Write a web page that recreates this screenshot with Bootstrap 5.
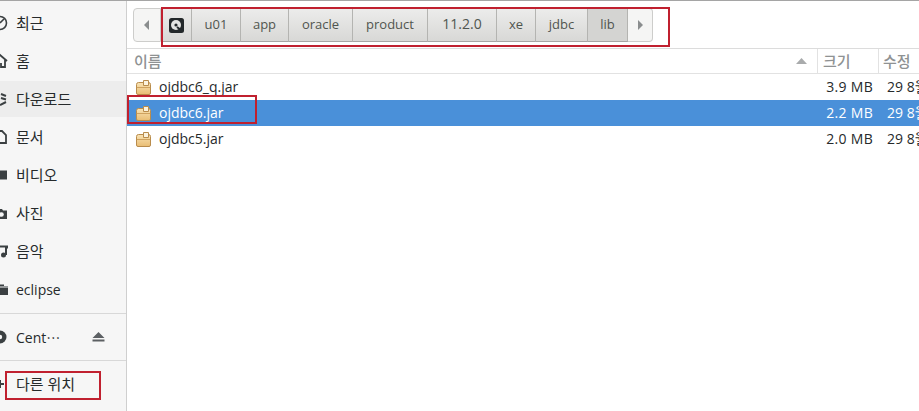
<!DOCTYPE html>
<html lang="ko">
<head>
<meta charset="UTF-8">
<title>ojdbc</title>
<link href="https://cdn.jsdelivr.net/npm/bootstrap@5.3.2/dist/css/bootstrap.min.css" rel="stylesheet">
<style>
body { width: 919px; height: 411px; overflow: hidden; background: #fff; color: #262a2b; font-family: "Open Sans", "Noto Sans CJK KR", sans-serif; font-size: 14px; }
.frame { height: 411px; border-top: 1px solid #a5a5a5; position: relative; overflow: hidden; }
.side { width: 127px; background: #f6f6f6; border-right: 1px solid #cfcfcf; padding-top: 3px; }
.side-item { height: 36px; margin: 1px 0; flex: none; }
.side-item.hov { background: #ededed; }
.side-item svg { flex: none; margin-right: 8px; }
.ko { font-size: 15px; }
.eject { margin-left: 32px; }
.side-sep { border-top: 1px solid #d8d8d8; margin: 5px 0 4px; }
.side-sep.next { margin: 4px 0; }
.pathbar { height: 48px; padding: 7px 6px 0; border-bottom: 1px solid #dcdcdc; }
.seg { height: 34px; border: 1px solid #b4b4b1; border-left: 0; border-bottom-color: #a6a6a4; background: linear-gradient(#ececeb, #d8d8d6); color: #50554f; font-size: 13px; }
.seg.cur { background: #d4d4d2; }
.seg.arrow { background: #f5f5f4; border-color: #cdcdcb; }
.s-back { width: 28px; border-left: 1px solid #cdcdcb; border-radius: 4px 0 0 4px; }
.s-disk { width: 31px; }
.s-u01 { width: 49px; }
.s-app { width: 48px; }
.s-oracle { width: 64px; }
.s-product { width: 75px; }
.s-ver { width: 69px; font-size: 14px; padding-bottom: 3px; }
.s-xe { width: 39px; }
.s-jdbc { width: 52px; }
.s-lib { width: 40px; }
.s-fwd { width: 25px; border-radius: 0 4px 4px 0; }
.cols { height: 25px; border-bottom: 1px solid #e2e2e2; color: #8f9293; font-weight: 500; font-size: 15px; }
.c-name { width: 690px; padding-left: 7px; padding-right: 10px; }
.c-size { width: 61px; padding-left: 5px; border-left: 1px solid #e2e2e2; }
.c-date { padding-left: 4px; border-left: 1px solid #e2e2e2; white-space: nowrap; }
.file { height: 26px; }
.file.sel { background: #4a90d9; color: #fff; }
.f-name { width: 690px; padding-left: 9px; gap: 8px; }
.f-label { padding-bottom: 2px; }
.f-size { width: 61px; text-align: right; padding-right: 5px; padding-bottom: 2px; letter-spacing: .3px; }
.f-date { padding-left: 9px; padding-bottom: 2px; white-space: nowrap; }
.redbox { position: absolute; border: 2px solid #c0202f; }
.rb-path { left: 161px; top: 6px; width: 509px; height: 40px; }
.rb-file { left: 127px; top: 94px; width: 130px; height: 29px; }
.rb-other { left: 5px; top: 370px; width: 96px; height: 29px; }
</style>
</head>
<body>
<svg width="0" height="0" class="position-absolute">
  <defs>
    <linearGradient id="pkg" x1="0" y1="0" x2="0" y2="1"><stop offset="0" stop-color="#f9e3b4"/><stop offset="1" stop-color="#e9bd74"/></linearGradient>
    <symbol id="jar" viewBox="0 0 15 15">
      <path d="M.5 4.5 Q.5 2.5 2.5 2.5 H12.5 Q14.5 2.5 14.5 4.5 V13 Q14.5 14.5 13 14.5 H2 Q.5 14.5 .5 13Z" fill="url(#pkg)" stroke="#b98c4c"/>
      <path d="M.8 7.5 H14.2" stroke="#cfa25f"/>
      <path d="M7.5 .5 H12.5 V5.5 H7.5Z" fill="#fbf3df" stroke="#b98c4c"/>
    </symbol>
  </defs>
</svg>
<div class="frame d-flex">
  <div class="side d-flex flex-column flex-shrink-0">
    <div class="side-item d-flex align-items-center ko">
      <svg width="8" height="16" viewBox="8 0 8 16"><circle cx="8" cy="8" r="6.5" fill="none" stroke="#3b4042" stroke-width="1.6"/><path d="M8 8 L12 4" stroke="#3b4042" stroke-width="1.6"/></svg>최근</div>
    <div class="side-item d-flex align-items-center ko">
      <svg width="8" height="16" viewBox="8 0 8 16"><path d="M1 8 L8 2 L15 8 M13 7 V14 H9 V10" fill="none" stroke="#3b4042" stroke-width="1.8"/></svg>홈</div>
    <div class="side-item hov d-flex align-items-center ko">
      <svg width="8" height="16" viewBox="8 0 8 16"><path d="M9 3 L14 5 M9 7 L14 8.5 M8 14 L14 11" fill="none" stroke="#3b4042" stroke-width="2"/></svg>다운로드</div>
    <div class="side-item d-flex align-items-center ko">
      <svg width="8" height="16" viewBox="8 0 8 16"><path d="M6 2 H10 L14 6 V14 H6" fill="none" stroke="#3b4042" stroke-width="1.8"/></svg>문서</div>
    <div class="side-item d-flex align-items-center ko">
      <svg width="8" height="16" viewBox="8 0 8 16"><rect x="4" y="3.5" width="11" height="9" fill="#3b4042"/></svg>비디오</div>
    <div class="side-item d-flex align-items-center ko">
      <svg width="8" height="16" viewBox="8 0 8 16"><path d="M4 4 H10 L11 5.5 H15 V14 H4Z" fill="#3b4042"/><circle cx="9.5" cy="9.5" r="2.3" fill="#f6f6f6"/></svg>사진</div>
    <div class="side-item d-flex align-items-center ko">
      <svg width="8" height="16" viewBox="8 0 8 16"><path d="M6 3.5 H15 V5.5 M14 3.5 V12" fill="none" stroke="#3b4042" stroke-width="2"/><circle cx="11.5" cy="12" r="2.5" fill="#3b4042"/></svg>음악</div>
    <div class="side-item d-flex align-items-center">
      <svg width="8" height="16" viewBox="8 0 8 16"><path d="M4 3.5 H12 V5 H16 V14 H4Z" fill="#3b4042"/><path d="M4 6 H16" stroke="#f6f6f6"/></svg>eclipse</div>
    <div class="side-sep"></div>
    <div class="side-item d-flex align-items-center">
      <svg width="8" height="16" viewBox="8 0 8 16"><circle cx="8" cy="8" r="6.5" fill="#3b4042"/><circle cx="8" cy="8" r="2.2" fill="#f6f6f6"/></svg>Cent⋯
      <svg class="eject" width="13" height="10" viewBox="0 0 13 10"><path d="M6.5 0 L12.5 6 H.5Z M.5 7.5 H12.5 V9.5 H.5Z" fill="#5c6063"/></svg></div>
    <div class="side-sep next"></div>
    <div class="side-item d-flex align-items-center ko">
      <svg width="8" height="16" viewBox="8 0 8 16"><path d="M8 8 H12 M8 4 V12" stroke="#3b4042" stroke-width="2"/></svg>다른 위치</div>
  </div>
  <div class="flex-grow-1">
    <div class="pathbar d-flex">
      <div class="seg arrow s-back d-flex align-items-center justify-content-center"><svg width="6" height="10" viewBox="0 0 6 10"><path d="M5 0 V10 L0 5Z" fill="#8a8d8e"/></svg></div>
      <div class="seg s-disk d-flex align-items-center justify-content-center"><svg width="15" height="15" viewBox="0 0 15 15"><rect width="15" height="15" rx="2.5" fill="#23282a"/><circle cx="7" cy="7" r="5" fill="#e4e4e2"/><circle cx="7" cy="7" r="1.6" fill="#23282a"/><path d="M8 9 L12.5 12.5" stroke="#23282a" stroke-width="2"/></svg></div>
      <div class="seg s-u01 d-flex align-items-center justify-content-center">u01</div>
      <div class="seg s-app d-flex align-items-center justify-content-center">app</div>
      <div class="seg s-oracle d-flex align-items-center justify-content-center">oracle</div>
      <div class="seg s-product d-flex align-items-center justify-content-center">product</div>
      <div class="seg s-ver d-flex align-items-center justify-content-center">11.2.0</div>
      <div class="seg s-xe d-flex align-items-center justify-content-center">xe</div>
      <div class="seg s-jdbc d-flex align-items-center justify-content-center">jdbc</div>
      <div class="seg cur s-lib d-flex align-items-center justify-content-center">lib</div>
      <div class="seg arrow s-fwd d-flex align-items-center justify-content-center"><svg width="6" height="10" viewBox="0 0 6 10"><path d="M1 0 V10 L6 5Z" fill="#8a8d8e"/></svg></div>
    </div>
    <div class="cols d-flex">
      <div class="c-name d-flex align-items-center justify-content-between">이름<svg width="11" height="6" viewBox="0 0 11 6"><path d="M5.5 0 L11 6 H0Z" fill="#a9abac"/></svg></div>
      <div class="c-size d-flex align-items-center">크기</div>
      <div class="c-date d-flex align-items-center">수정</div>
    </div>
    <div class="file d-flex align-items-center"><div class="f-name d-flex align-items-center"><svg width="15" height="15"><use href="#jar"/></svg><span class="f-label">ojdbc6_q.jar</span></div><div class="f-size">3.9 MB</div><div class="f-date">29 8월</div></div>
    <div class="file sel d-flex align-items-center"><div class="f-name d-flex align-items-center"><svg width="15" height="15"><use href="#jar"/></svg><span class="f-label">ojdbc6.jar</span></div><div class="f-size">2.2 MB</div><div class="f-date">29 8월</div></div>
    <div class="file d-flex align-items-center"><div class="f-name d-flex align-items-center"><svg width="15" height="15"><use href="#jar"/></svg><span class="f-label">ojdbc5.jar</span></div><div class="f-size">2.0 MB</div><div class="f-date">29 8월</div></div>
  </div>
  <div class="redbox rb-path"></div>
  <div class="redbox rb-file"></div>
  <div class="redbox rb-other"></div>
</div>
<script src="https://cdn.jsdelivr.net/npm/bootstrap@5.3.2/dist/js/bootstrap.bundle.min.js"></script>
</body>
</html>
